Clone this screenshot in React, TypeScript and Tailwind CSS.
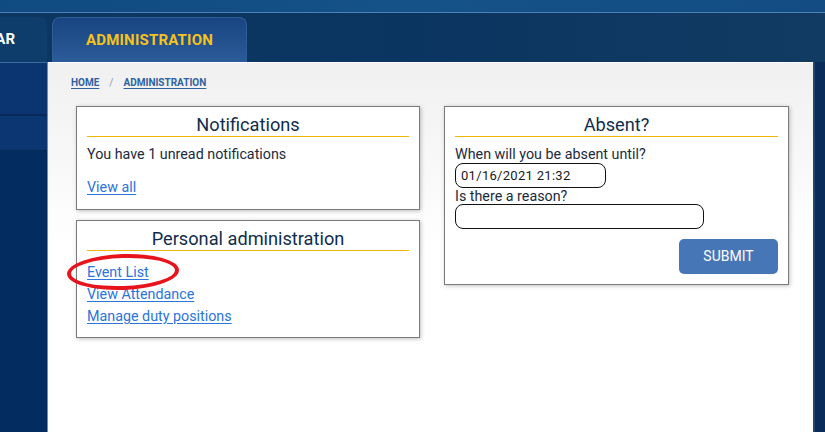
const font = { fontFamily: "Roboto, 'Liberation Sans', sans-serif" };

const Card = ({ title, children, className = "" }: { title: string; children: React.ReactNode; className?: string }) => (
  <div className={`relative bg-white border border-[#7b7b7b] shadow-[1px_1px_4px_rgba(0,0,0,0.25)] px-[10px] pt-[7px] ${className}`}>
    <h2 className="text-center text-[18.2px] leading-[22px] text-[#0f2d4c] border-b border-[#f2b705]">{title}</h2>
    {children}
  </div>
);

const linkCls = "text-[14.3px] leading-[22px] text-[#2b74dc] underline underline-offset-2";

export default function App() {
  return (
    <div style={font} className="w-[825px] h-[432px] overflow-hidden bg-[#0a2f60] flex flex-col">
      {/* top band */}
      <div className="h-[13px] shrink-0 bg-gradient-to-r from-[#0f4a80] via-[#155288] to-[#124c82] border-b border-[#4d7fbb]" />

      {/* nav */}
      <div className="h-[49px] shrink-0 flex items-end gap-[5px] bg-gradient-to-r from-[#0c3762] via-[#0a3560] to-[#123b63]">
        <div className="w-[47px] h-[45px] overflow-hidden bg-[#0e3c6b] rounded-tr-[8px] flex items-center justify-end pr-[32px]">
          <span className="text-white font-bold text-[15px] whitespace-nowrap">CALENDAR</span>
        </div>
        <div className="w-[195px] h-[45px] rounded-t-[8px] bg-gradient-to-b from-[#184582] to-[#2b5b98] border-t border-x border-[#2f5e97] flex items-center justify-center">
          <span className="text-[#f6c21c] font-bold text-[15px] tracking-[0.2px]">ADMINISTRATION</span>
        </div>
      </div>

      <div className="flex flex-1 min-h-0">
        {/* sidebar */}
        <div className="w-[48px] shrink-0 flex flex-col bg-[#032c60] border-r border-[#6d8db3] border-t border-t-[#3d6aa0]">
          <div className="h-[53px] bg-[#0a3571] border-b-2 border-[#072a57]" />
          <div className="h-[35px] bg-[#0b3672] border-b border-[#072a57]" />
        </div>

        {/* main panel */}
        <div className="flex-1 bg-white pt-[1px]">
          <div className="h-full bg-gradient-to-b from-[#f0f0f0] via-white to-white pl-[28px] pr-[23px]">
            <div className="h-[43px] flex items-center gap-[10px] text-[10px] font-bold pb-[4px] -ml-[5px]">
              <a className="text-[#2e62a0] underline underline-offset-2">HOME</a>
              <span className="text-[#8a9bb0] font-normal">/</span>
              <a className="text-[#2e62a0] underline underline-offset-2">ADMINISTRATION</a>
            </div>

            <div className="flex gap-[24px] items-start text-[#1b2b3d]">
              <div className="w-[344px] flex flex-col gap-[10px]">
                <Card title="Notifications" className="h-[104px]">
                  <p className="text-[14.3px] leading-[18px] mt-[8px]">You have 1 unread notifications</p>
                  <a className={`${linkCls} block mt-[13px]`}>View all</a>
                </Card>
                <Card title="Personal administration" className="pb-[10px]">
                  <div className="flex flex-col items-start mt-[10px]">
                    <a className={linkCls}>Event List</a>
                    <a className={linkCls}>View Attendance</a>
                    <a className={linkCls}>Manage duty positions</a>
                  </div>
                  <div className="absolute left-[-10px] top-[33px] w-[112px] h-[36px] rounded-[50%] border-[4px] border-[#e8141c] -rotate-2" />
                </Card>
              </div>

              <Card title="Absent?" className="w-[345px] pb-[10px]">
                <label className="block text-[14.3px] leading-[18px] mt-[8px]">When will you be absent until?</label>
                <div className="w-[151px] h-[25px] border border-[#111] rounded-[8px] flex items-center pl-[5px] text-[13px] text-[#1a1a1a] tracking-[0.3px]">
                  01/16/2021 21:32
                </div>
                <label className="block text-[14.3px] leading-[16px]">Is there a reason?</label>
                <div className="w-[249px] h-[25px] border border-[#111] rounded-[8px]" />
                <div className="flex justify-end mt-[10px]">
                  <button className="w-[99px] h-[35px] rounded-[5px] bg-[#4776b6] text-white text-[14px]">SUBMIT</button>
                </div>
              </Card>
            </div>
          </div>
        </div>

        {/* right strip */}
        <div className="w-[12px] shrink-0 bg-[#0a2c5a] border-l-2 border-[#23476f]" />
      </div>
    </div>
  );
}
